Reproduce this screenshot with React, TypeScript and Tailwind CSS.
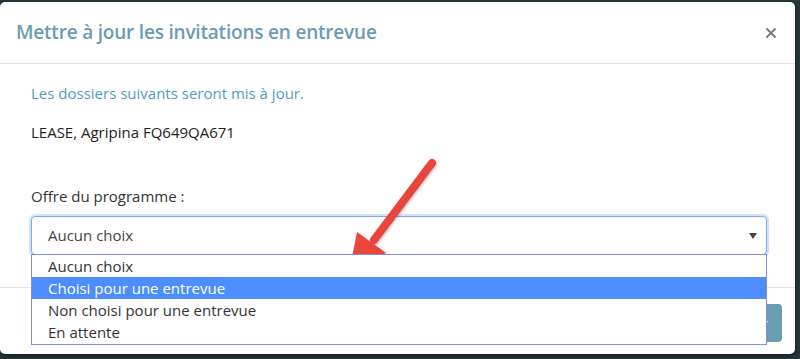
import { useState } from 'react'

const options = [
  'Aucun choix',
  'Choisi pour une entrevue',
  'Non choisi pour une entrevue',
  'En attente',
]

function RedArrow() {
  return (
    <svg
      className="pointer-events-none absolute left-[340px] top-[150px]"
      width="110"
      height="130"
      viewBox="0 0 110 130"
    >
      <defs>
        <filter id="sh" x="-20%" y="-20%" width="140%" height="140%">
          <feDropShadow dx="1" dy="1" stdDeviation="1.2" floodColor="#000" floodOpacity="0.25" />
        </filter>
      </defs>
      <g filter="url(#sh)">
        <line x1="92" y1="13" x2="34" y2="90" stroke="#e8453d" strokeWidth="8" strokeLinecap="round" />
        <polygon points="10,118 17,82 46,103" fill="#e8453d" />
      </g>
    </svg>
  )
}

export default function App() {
  const [selected] = useState(1)

  return (
    <div
      className="relative h-[359px] w-[800px] overflow-hidden bg-[#26363b]"
      style={{ fontFamily: '"Open Sans", "Noto Sans", sans-serif' }}
    >
      <div className="mt-[2px] flex h-[352px] w-[795px] flex-col rounded-[5px] bg-white shadow-[0_2px_4px_rgba(0,0,0,0.5)]">
        {/* En-tête */}
        <div className="flex h-[62px] items-center justify-between border-b border-[#e5e5e5] pl-4 pr-[18px]">
          <h4 className="text-[19px] font-semibold tracking-[-0.2px] text-[#6b9bb5]">
            Mettre à jour les invitations en entrevue
          </h4>
          <svg width="12" height="12" viewBox="0 0 12 12" className="mt-[1px]">
            <path d="M1.5 1.5 L10.5 10.5 M10.5 1.5 L1.5 10.5" stroke="#7a7a7a" strokeWidth="2" />
          </svg>
        </div>

        {/* Corps */}
        <div className="flex h-[223px] flex-col pl-[31px] pr-[28px]">
          <p className="mt-[19px] text-[15px] leading-[21px] text-[#4f9cc2]">Les dossiers suivants seront mis à jour.</p>
          <p className="mt-[18px] text-[15px] leading-[21px] text-[#222]">LEASE, Agripina FQ649QA671</p>
          <label className="mt-[43px] text-[15px] leading-[21px] text-[#333]">Offre du programme :</label>
          <div className="relative mt-[9px]">
            <div className="flex h-[39px] items-center justify-between rounded-[4px] border border-[#7aa7f0] pl-4 pr-[9px] shadow-[0_0_0_2px_rgba(102,160,245,0.3)]">
              <span className="text-[15px] text-[#444]">Aucun choix</span>
              <svg width="8" height="6" viewBox="0 0 8 6">
                <polygon points="0,0 8,0 4,6" fill="#444" />
              </svg>
            </div>
            <ul className="absolute left-0 right-0 top-[38px] z-10 border border-[#7f8fd0] bg-white pb-[1px]">
              {options.map((opt, i) => (
                <li
                  key={opt}
                  className={
                    'flex h-[22px] items-center pl-4 text-[15px] ' +
                    (i === selected ? 'bg-[#4d8dff] text-white' : 'text-[#333]')
                  }
                >
                  {opt}
                </li>
              ))}
            </ul>
          </div>
        </div>

        {/* Pied */}
        <div className="flex flex-1 items-start justify-end border-t border-[#e5e5e5] pr-[13px] pt-[16px]">
          <button className="flex h-[38px] w-[130px] items-center justify-end rounded-[4px] bg-[#6a9db2] pr-[14px] text-[14px] text-white">
            Sauvegarder
          </button>
        </div>
      </div>
      <RedArrow />
    </div>
  )
}
